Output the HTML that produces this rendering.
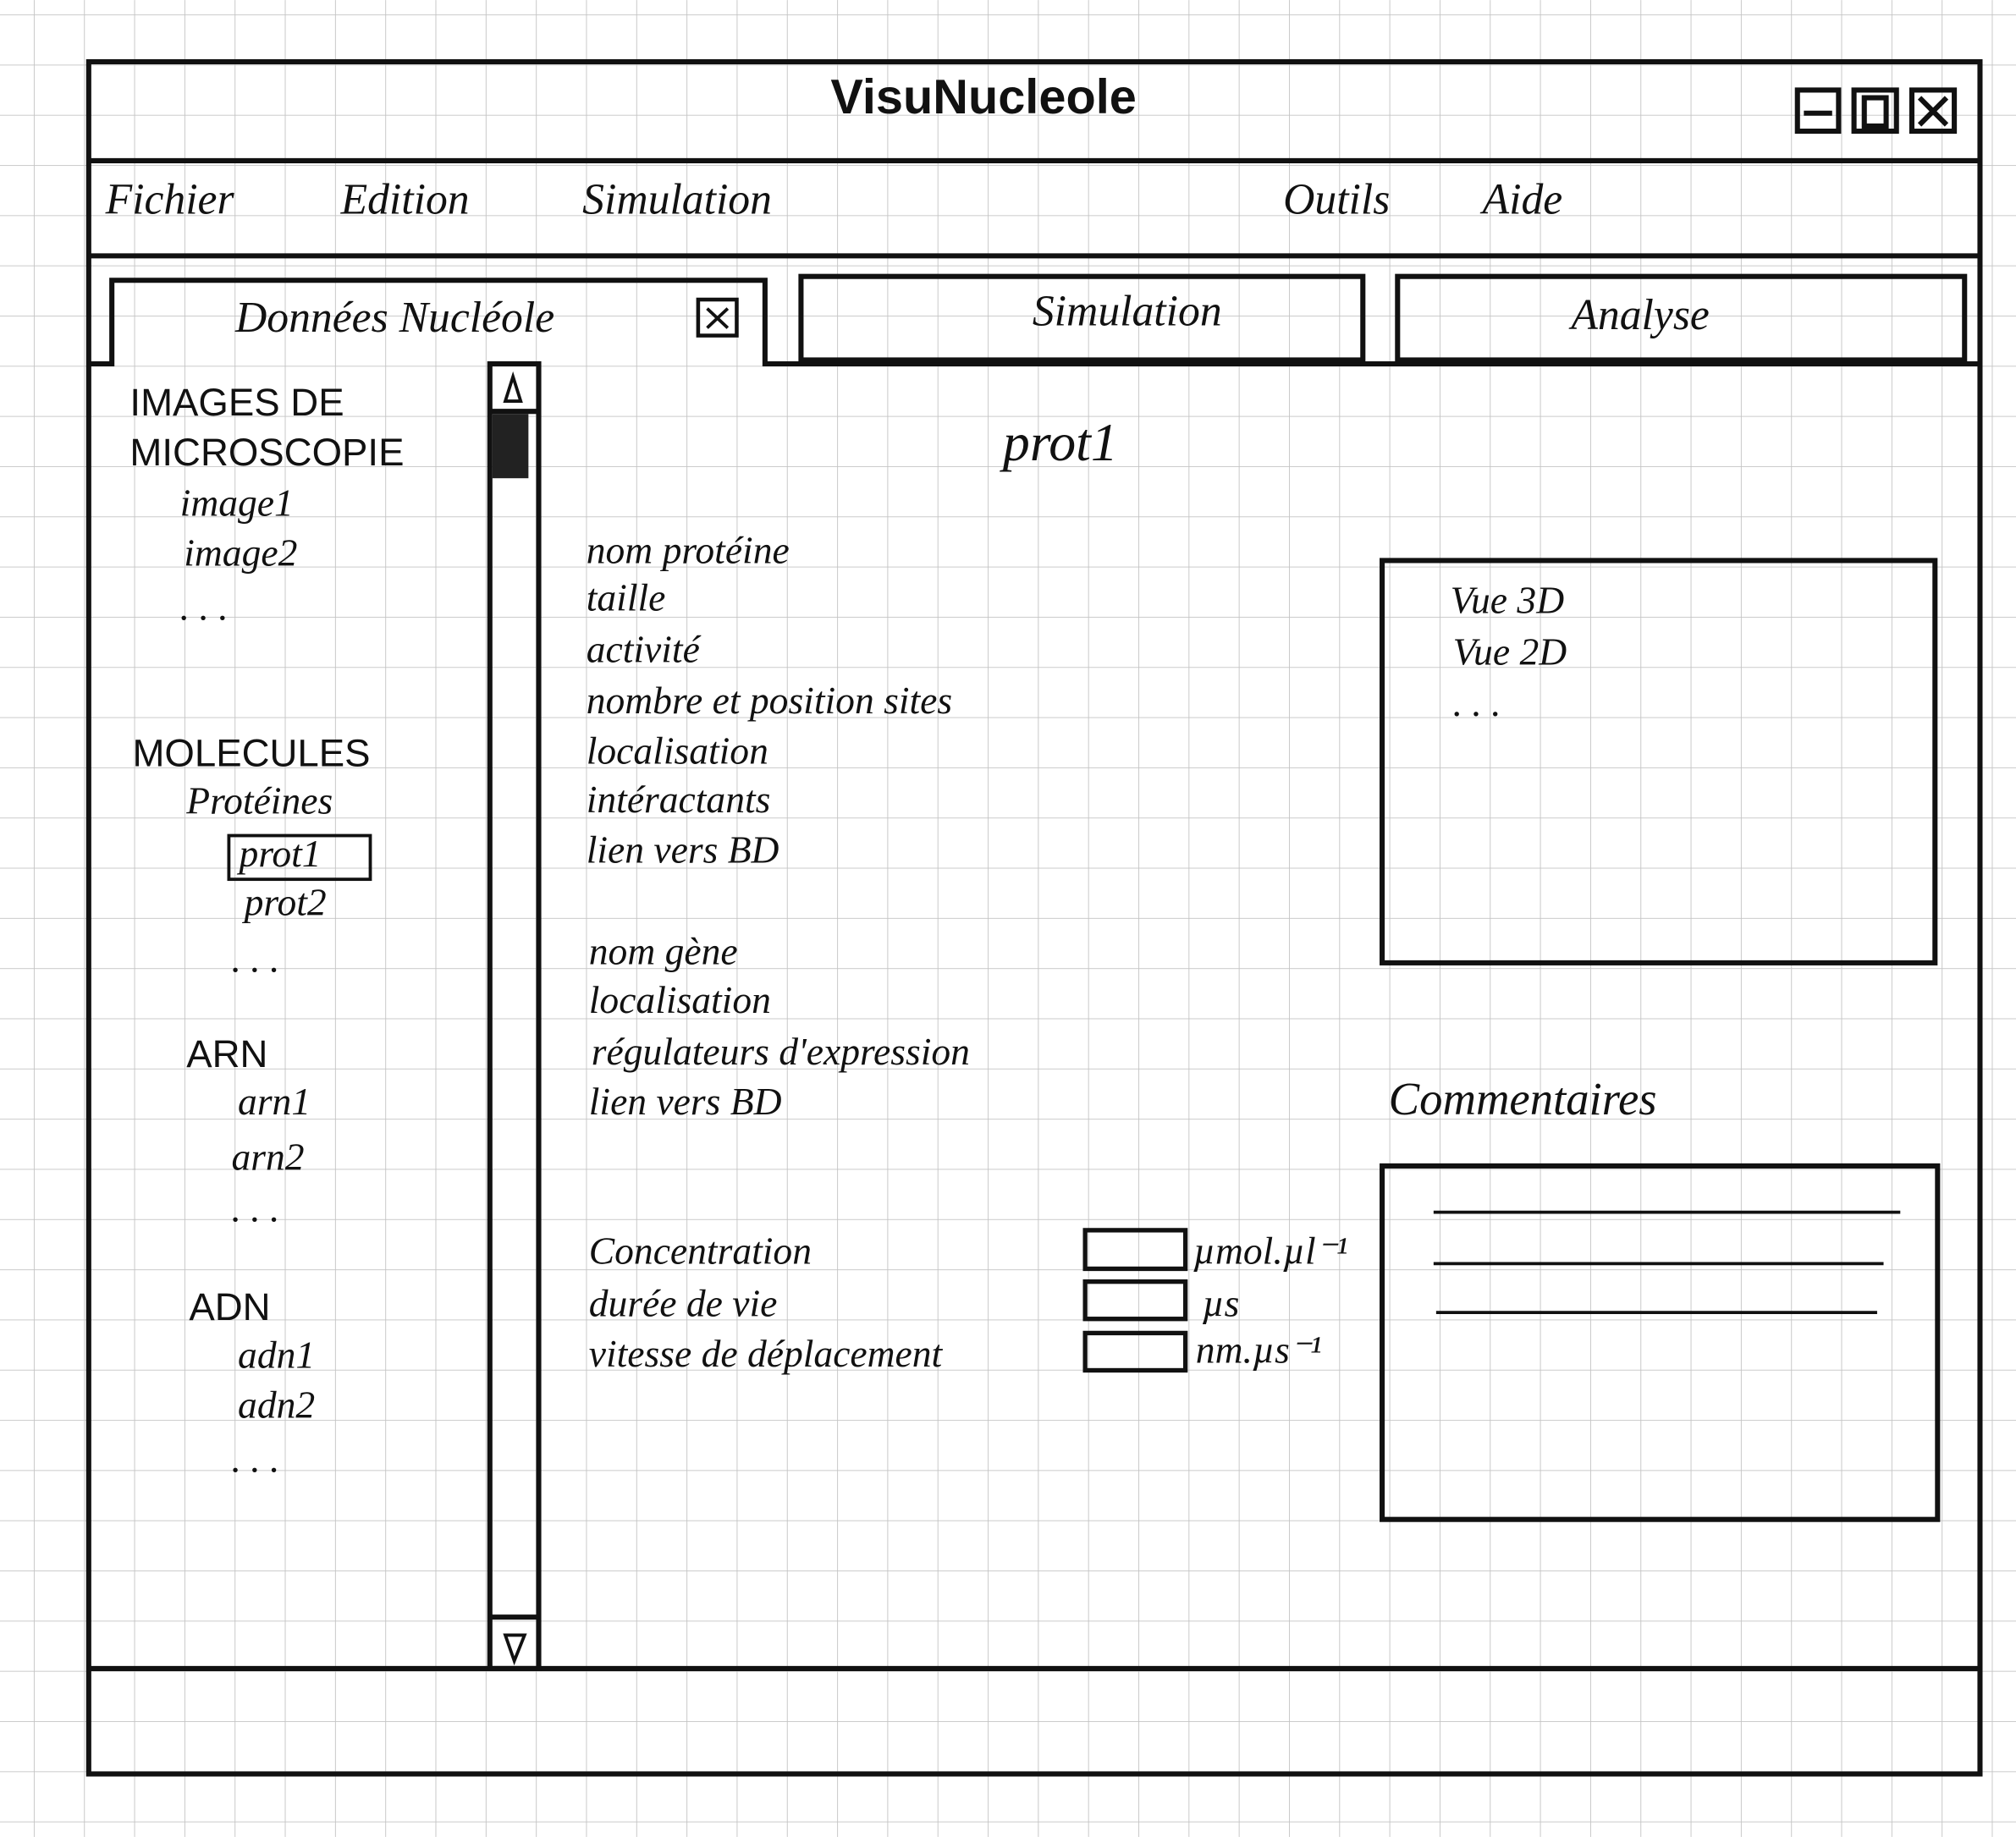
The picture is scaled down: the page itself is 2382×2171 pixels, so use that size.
<!DOCTYPE html>
<html><head><meta charset="utf-8"><style>
html,body{margin:0;padding:0;background:#fff}
svg{display:block}
.h{font-family:"Liberation Serif",serif;font-style:italic;fill:#111}
.p{font-family:"Liberation Sans",sans-serif;fill:#111}
</style></head><body>
<svg width="2382" height="2171" viewBox="0 0 1568 1429" xmlns="http://www.w3.org/2000/svg">
<defs>
<pattern id="g" x="26.3" y="11.2" width="39.05" height="39.05" patternUnits="userSpaceOnUse">
<path d="M0 0H39.05M0 0V39.05" stroke="#c4c4c4" stroke-width="1.2" fill="none"/>
</pattern>
</defs>
<rect width="1568" height="1429" fill="#fff"/>
<rect width="1568" height="1429" fill="url(#g)"/>
<g stroke="#111" stroke-width="4" fill="none">
<rect x="69" y="48" width="1471" height="1332"/>
<line x1="69" y1="125" x2="1540" y2="125"/>
<line x1="69" y1="199" x2="1540" y2="199"/>
<line x1="69" y1="1298" x2="1540" y2="1298"/>
<!-- window buttons -->
<rect x="1398" y="70" width="32" height="32"/><line x1="1403" y1="88" x2="1425" y2="88"/>
<rect x="1442" y="70" width="33" height="32"/><rect x="1450" y="76" width="17" height="22"/>
<rect x="1487" y="70" width="33" height="32"/><path d="M1493 76L1514 97M1514 76L1493 97"/>
<!-- tabs -->
<path d="M69 283H87V218H595V283H1540"/>
<rect x="623" y="215" width="437" height="65"/>
<rect x="1087" y="215" width="441" height="65"/>
<rect x="543" y="233" width="30" height="28" stroke-width="3"/>
<path d="M550 240L566 255M566 240L550 255" stroke-width="2.5"/>
<!-- scrollbar -->
<rect x="381" y="283" width="38" height="1015"/>
<line x1="381" y1="320" x2="419" y2="320"/>
<line x1="381" y1="1258" x2="419" y2="1258"/>
<path d="M393 312L399 293L405 312Z" stroke-width="2.5"/>
<path d="M393 1272L400 1292L408 1272Z" stroke-width="2.5"/>
<!-- right boxes -->
<rect x="1075" y="436" width="430" height="313"/>
<rect x="1075" y="907" width="432" height="275"/>
<line x1="1115" y1="943" x2="1478" y2="943" stroke-width="2.5"/>
<line x1="1115" y1="983" x2="1465" y2="983" stroke-width="2.5"/>
<line x1="1117" y1="1021" x2="1460" y2="1021" stroke-width="2.5"/>
<!-- inputs -->
<rect x="844" y="957" width="78" height="30" stroke-width="3.5"/>
<rect x="844" y="997" width="78" height="29" stroke-width="3.5"/>
<rect x="844" y="1037" width="78" height="29" stroke-width="3.5"/>
<rect x="178" y="650" width="110" height="34" stroke-width="2.5"/>
</g>
<rect x="383" y="322" width="28" height="50" fill="#222"/>
<text x="765" y="88" class="p" font-size="38" font-weight="bold" text-anchor="middle">VisuNucleole</text>
<g class="h" font-size="34">
<text x="82" y="166">Fichier</text>
<text x="265" y="166">Edition</text>
<text x="453" y="166">Simulation</text>
<text x="998" y="166">Outils</text>
<text x="1153" y="166">Aide</text>
<text x="183" y="258">Données  Nucléole</text>
<text x="803" y="253">Simulation</text>
<text x="1222" y="256">Analyse</text>
</g>
<g class="p" font-size="30">
<text x="101" y="323">IMAGES  DE</text>
<text x="101" y="362">MICROSCOPIE</text>
<text x="103" y="596">MOLECULES</text>
<text x="145" y="830">ARN</text>
<text x="147" y="1027">ADN</text>
</g>
<g class="h" font-size="30">
<text x="140" y="401">image1</text>
<text x="143" y="440">image2</text>
<text x="140" y="482">. . .</text>
<text x="145" y="633">Protéines</text>
<text x="186" y="674">prot1</text>
<text x="190" y="712">prot2</text>
<text x="180" y="756">. . .</text>
<text x="185" y="867">arn1</text>
<text x="180" y="910">arn2</text>
<text x="180" y="950">. . .</text>
<text x="185" y="1064">adn1</text>
<text x="185" y="1103">adn2</text>
<text x="180" y="1145">. . .</text>
<text x="780" y="358" font-size="42">prot1</text>
<text x="456" y="438">nom   protéine</text>
<text x="456" y="475">taille</text>
<text x="456" y="515">activité</text>
<text x="456" y="555">nombre et position sites</text>
<text x="456" y="594">localisation</text>
<text x="456" y="632">intéractants</text>
<text x="456" y="671">lien vers BD</text>
<text x="458" y="750">nom gène</text>
<text x="458" y="788">localisation</text>
<text x="460" y="828">régulateurs d'expression</text>
<text x="458" y="867">lien vers BD</text>
<text x="458" y="983">Concentration</text>
<text x="458" y="1024">durée de vie</text>
<text x="458" y="1063">vitesse de déplacement</text>
<text x="928" y="983">µmol.µl⁻¹</text>
<text x="935" y="1024">µs</text>
<text x="930" y="1060">nm.µs⁻¹</text>
<text x="1128" y="477">Vue 3D</text>
<text x="1130" y="517">Vue 2D</text>
<text x="1130" y="557">. . .</text>
<text x="1080" y="867" font-size="36">Commentaires</text>
</g>
</svg>
</body></html>
